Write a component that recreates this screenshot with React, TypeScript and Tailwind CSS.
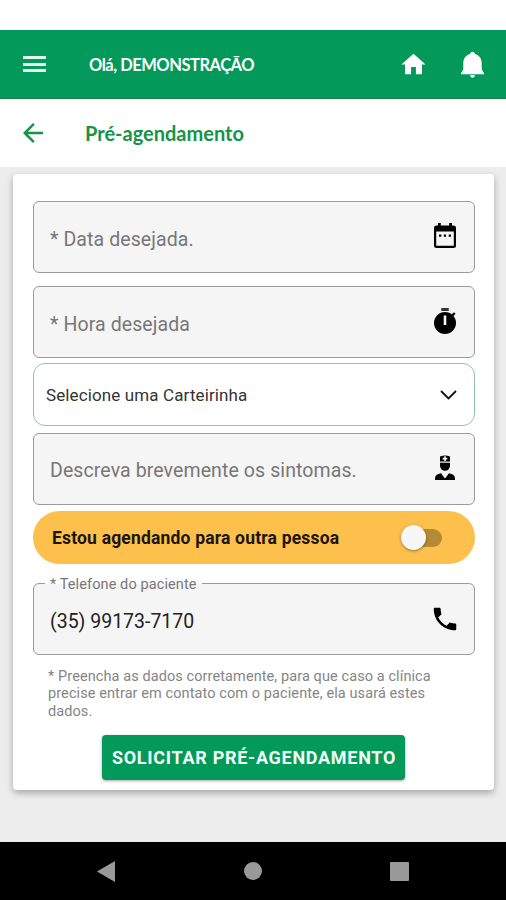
import { useState, type ReactNode } from 'react';

interface FieldProps {
  label: string;
  icon: ReactNode;
  className?: string;
  inputClassName?: string;
}

const CalendarIcon = () => (
  <svg className="mb-0.5" width="24" height="26" viewBox="0 0 24 26">
    <path
      fillRule="evenodd"
      d="M5 0h2.800v2.500h8.400V0H19v2.500h1.500A2.500 2.500 0 0 1 23 5v17.500a2.500 2.500 0 0 1-2.500 2.500h-17A2.500 2.500 0 0 1 1 22.500V5a2.500 2.500 0 0 1 2.500-2.500H5zM3.200 8.500V22.800h17.600V8.500z"
    />
    <path d="M6 11.500h2.300v2.300H6zM10.800 11.500h2.300v2.300h-2.300zM15.700 11.500H18v2.300h-2.300z" />
  </svg>
);

const StopwatchIcon = () => (
  <svg className="mb-0.5" width="24" height="28" viewBox="0 0 24 28">
    <path d="M8.300 1h7.400v3H8.300z" fill="#333" />
    <path d="M18.500 7.500l2.500-2.300 1.600 1.600-2.300 2.400z" />
    <circle cx="12" cy="16" r="11" />
    <path d="M10.700 8.500h2.600v9.500h-2.600z" fill="#f5f5f5" />
  </svg>
);

const DoctorIcon = () => (
  <svg className="mb-0.5" width="22" height="28" viewBox="0 0 22 28">
    <path d="M6 2.500Q11 .5 16 2.500V7.500H6z" />
    <path d="M10.200 2.300h1.600v1.500h1.500v1.600h-1.500v1.500h-1.600V5.400H8.700V3.800h1.500z" fill="#f5f5f5" />
    <path d="M6 8.800h10v2.700a5 5.200 0 0 1-10 0z" />
    <path d="M1 26v-2q0-3.500 6-4.800l4 5.300 4-5.300q6 1.300 6 4.800v2z" />
  </svg>
);

const PhoneIcon = () => (
  <svg width="30" height="30" viewBox="0 0 24 24">
    <path d="M6.620 10.790c1.440 2.830 3.760 5.140 6.590 6.590l2.200-2.200c.27-.27.67-.36 1.020-.24 1.120.37 2.330.57 3.570.57.55 0 1 .45 1 1V20c0 .55-.45 1-1 1-9.390 0-17-7.610-17-17 0-.55.45-1 1-1h3.500c.55 0 1 .45 1 1 0 1.250.2 2.450.57 3.570.11.35.03.74-.25 1.020l-2.200 2.200z" />
  </svg>
);

function Field({ label, icon, className = '', inputClassName = 'mt-[5px]' }: FieldProps) {
  return (
    <label
      className={`flex h-[72px] items-center justify-between rounded-md border border-[#9b9b9b] bg-[#f5f5f5] pr-[17px] pl-4 ${className}`}
    >
      <input
        type="text"
        placeholder={label}
        className={`min-w-0 flex-1 bg-transparent text-[19.500px] tracking-[0.1px] text-[#222] outline-none placeholder:text-[#777] ${inputClassName}`}
      />
      <span className="flex w-6 shrink-0 justify-center">{icon}</span>
    </label>
  );
}

export default function App() {
  const [otherPerson, setOtherPerson] = useState(false);

  return (
    <div className="flex h-[900px] w-[506px] flex-col overflow-hidden bg-[#ededed] font-[Roboto,sans-serif]">
      {/* Status bar */}
      <div className="h-[30px] shrink-0 bg-white" />

      {/* Header */}
      <header className="flex h-[69px] shrink-0 items-center border-b border-[#16804a] bg-[#02995a] pr-[21px] pl-[23px] text-white">
        <button className="flex w-[23px] flex-col gap-[3.500px]" aria-label="Menu">
          <span className="h-[3px] w-full bg-[#e4f7ec]" />
          <span className="h-[3px] w-full bg-[#e4f7ec]" />
          <span className="h-[3px] w-full bg-[#e4f7ec]" />
        </button>
        <span className="mt-0.5 ml-[43px] flex-1 whitespace-nowrap font-[Lato,sans-serif] text-[16.500px] font-bold tracking-[-0.480px]">
          Olá, DEMONSTRAÇÃO
        </span>
        <svg width="29" height="29" viewBox="0 0 24 24" fill="currentColor">
          <path d="M10 20v-6h4v6h5v-8h3L12 3 2 12h3v8z" />
        </svg>
        <svg className="mt-px ml-8" width="25" height="28" viewBox="0 0 25 28" fill="currentColor">
          <path d="M12.500.8c1.400 0 2.300.9 2.400 2.300 4.300 1.200 6.800 4.500 6.800 9.200v6.200l2.300 3.800v1H1v-1l2.300-3.800v-6.200c0-4.700 2.500-8 6.800-9.200C10.200 1.700 11.100.8 12.500.8z" />
          <path d="M10.200 24h4.600c0 1.800-1 2.800-2.300 2.800s-2.300-1-2.300-2.800z" />
        </svg>
      </header>

      {/* Page title */}
      <div className="flex h-[68px] shrink-0 items-center bg-white pl-[18px] text-[#159447]">
        <svg width="30" height="30" viewBox="0 0 24 24" fill="currentColor">
          <path d="M20 11H7.830l5.590-5.590L12 4l-8 8 8 8 1.410-1.410L7.830 13H20z" />
        </svg>
        <h1 className="ml-[37px] font-[Lato,sans-serif] text-[20px] font-bold">Pré-agendamento</h1>
      </div>

      <main className="flex-1 pt-[7px] pr-3 pl-[13px]">
        <div className="flex h-[616px] flex-col rounded bg-white pt-[27px] pr-[19px] pl-5 shadow-[0_3px_7px_rgba(0,0,0,0.3)]">
          <Field label="* Data desejada." icon={<CalendarIcon />} />
          <Field label="* Hora desejada" icon={<StopwatchIcon />} className="mt-[13px]" />

          <button className="mt-[5px] flex h-[63px] shrink-0 items-center justify-between rounded-xl border border-[#8fc4a9] bg-white pr-[17px] pl-3 text-[17px] tracking-[0.120px] text-[#333]">
            <span className="mt-0.5">Selecione uma Carteirinha</span>
            <svg width="17" height="10" viewBox="0 0 17 10" fill="none" stroke="#111" strokeWidth="1.800">
              <path d="M1 1l7.500 7.500L16 1" />
            </svg>
          </button>

          <Field
            label="Descreva brevemente os sintomas."
            icon={<DoctorIcon />}
            className="mt-[7px]"
            inputClassName="mt-[3px]"
          />

          <div className="mt-[6px] flex h-[53px] shrink-0 items-center justify-between rounded-full bg-[#fdc04d] pr-[33px] pl-[19px]">
            <span className="mt-0.5 text-[17.500px] font-bold tracking-[0.180px] text-[#1c1405]">
              Estou agendando para outra pessoa
            </span>
            <button
              role="switch"
              aria-checked={otherPerson}
              aria-label="Estou agendando para outra pessoa"
              onClick={() => setOtherPerson(!otherPerson)}
              className={`flex h-[26px] w-[41px] items-center ${otherPerson ? 'flex-row-reverse' : ''}`}
            >
              <span className="z-10 size-[25px] shrink-0 rounded-full bg-[#f7f7f7] shadow-[0_1px_3px_rgba(0,0,0,0.4)]" />
              <span className="-mx-3 h-[18px] w-[28px] shrink-0 rounded-full bg-[#b58a36]" />
            </button>
          </div>

          <div className="relative mt-[19px] flex h-[72px] shrink-0 items-center justify-between rounded-md border border-[#9b9b9b] bg-[#f5f5f5] pr-[14px] pl-4">
            <label
              htmlFor="telefone"
              className="absolute -top-[9px] left-[11px] bg-[linear-gradient(#fff_9px,#f5f5f5_9px)] px-[5px] text-[14.500px] leading-[20px] tracking-[0.100px] whitespace-nowrap text-[#777]"
            >
              * Telefone do paciente
            </label>
            <input
              id="telefone"
              type="tel"
              defaultValue="(35) 99173-7170"
              className="mt-1.5 min-w-0 flex-1 bg-transparent text-[19.500px] text-[#222] outline-none"
            />
            <PhoneIcon />
          </div>

          <p className="mt-[13px] pl-[15px] text-[14.500px] leading-[17.300px] tracking-[0.090px] whitespace-nowrap text-[#858585]">
            * Preencha as dados corretamente, para que caso a clínica
            <br />
            precise entrar em contato com o paciente, ela usará estes
            <br />
            dados.
          </p>

          <button className="mt-[15px] ml-[69px] h-[45px] w-[303px] shrink-0 rounded bg-[#02995a] pl-px text-[18px] font-bold tracking-[0.720px] whitespace-nowrap text-[#f1fff7] shadow-[0_1px_3px_rgba(0,0,0,0.35)]">
            SOLICITAR PRÉ-AGENDAMENTO
          </button>
        </div>
      </main>

      {/* Android navigation */}
      <nav className="flex h-[58px] shrink-0 items-center justify-between bg-black pr-[97px] pl-[97px] text-[#999]">
        <svg width="18" height="21" viewBox="0 0 18 21" fill="currentColor">
          <path d="M18 0v21L0 10.500z" />
        </svg>
        <span className="size-[18px] rounded-full bg-[#999]" />
        <span className="size-[19px] rounded-[1px] bg-[#999]" />
      </nav>
    </div>
  );
}
